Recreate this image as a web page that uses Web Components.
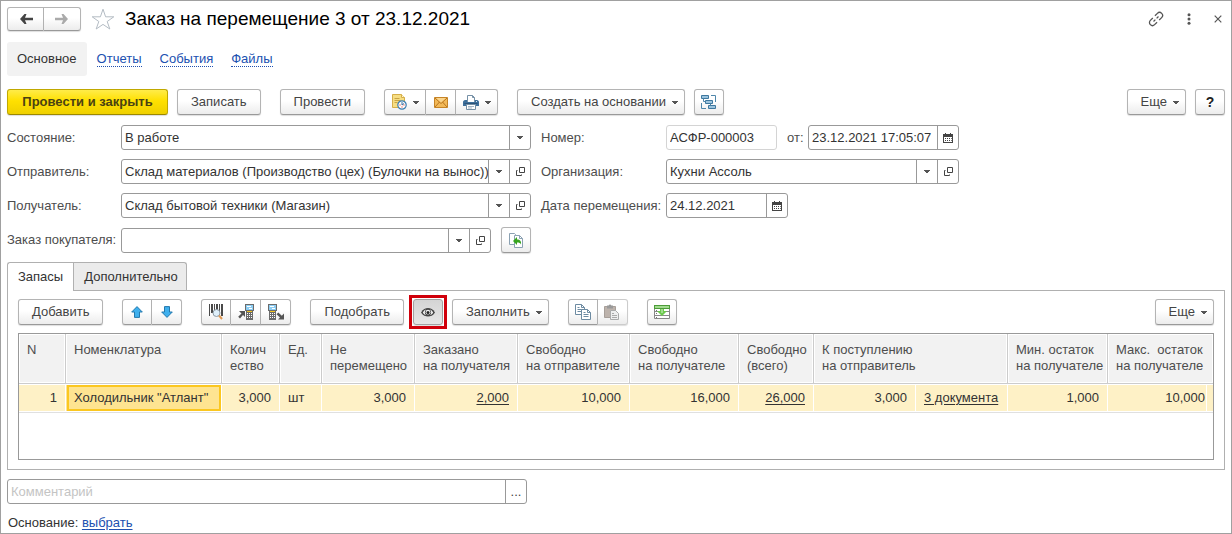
<!DOCTYPE html>
<html lang="ru">
<head>
<meta charset="utf-8">
<title>Заказ на перемещение 3 от 23.12.2021</title>
<style>
  body { margin: 0; background: #fff; font: 13px/16px "Liberation Sans", Arial, sans-serif; color: #4d4d4d; }
</style>
</head>
<body>
<order-window></order-window>

<script>
const define = (name, html, setup) => {
  const template = document.createElement('template');
  template.innerHTML = html;
  customElements.define(name, class extends HTMLElement {
    constructor() {
      super();
      this.attachShadow({ mode: 'open' }).append(template.content.cloneNode(true));
    }
    connectedCallback() {
      if (setup && !this.ready) { this.ready = true; setup(this, this.shadowRoot); }
    }
  });
};

/* ---------- icons: [width, height, drawing] ---------- */
const handheld = '<path d="M0 0h9v7H8v9H1V7H0z" fill="#6b6b6b"/><path d="M1 1h7v5H1z" fill="#8ccdf3"/><path d="M2 2h4v1H2zM4 4h3v1H4z" fill="#fff"/><path d="M2 7h5v1H2z" fill="#f2c51d"/><path d="M2 9h1v1H2zm2 0h1v1H4zm2 0h1v1H6zm-4 2h1v1H2zm2 0h1v1H4zm2 0h1v1H6zm-4 2h1v1H2zm2 0h1v1H4zm2 0h1v1H6z" fill="#fff"/>';
const sheets = (paper, line) => `<path d="M.5.5h6l3 3v7h-9z" fill="${paper}" stroke="${line}"/><path d="M6.500 .5v3h3M2.500 3.500h2M2.500 5.500h5M2.500 7.500h5" fill="none" stroke="${line}"/><path d="M6.500 5.500h6l3 3v7h-9z" fill="${paper}" stroke="${line}"/><path d="M12.500 5.500v3h3M8.500 8.500h2M8.500 10.500h5M8.500 12.500h5" fill="none" stroke="${line}"/>`;
const ICONS = {
  back: [14, 10, '<path d="M5.500 0 1 5l4.500 5H7.500L6 6.300h8V3.700H6L7.500 0z" fill="#444"/>'],
  forward: [14, 10, '<path d="M8.500 0 13 5l-4.500 5H6.500L8 6.300H0V3.700h8L6.500 0z" fill="#aaa"/>'],
  star: [24, 22, '<path d="M12 1.200l2.600 7.600h8.200l-6.600 4.700 2.600 7.500L12 16.400 5.200 21l2.600-7.500L1.200 8.800h8.200z" fill="#fff" stroke="#b4bcc4"/>'],
  link: [16, 16, '<g transform="rotate(-45 8 8)" fill="none" stroke="#555" stroke-width="1.300"><path d="M6.500 5H3a3 3 0 0 0 0 6h3.500M9.500 5H13a3 3 0 0 1 0 6H9.500M4.500 8h2.600M8.900 8h2.600"/></g>'],
  dots: [4, 12, '<circle cx="2" cy="1.700" r="1.500" fill="#555"/><circle cx="2" cy="6" r="1.500" fill="#555"/><circle cx="2" cy="10.300" r="1.500" fill="#555"/>'],
  close: [8, 8, '<path d="M.7.7l6.600 6.600M7.300.7.7 7.300" stroke="#555" stroke-width="1.200"/>'],
  caret: [6, 3, '<path d="M0 0h6v1H5v1H4v1H2V2H1V1H0z" fill="#555"/>'],
  open: [9, 9, '<path d="M3.500.5h5v5h-5z" fill="none" stroke="#444"/><path d="M1.500 3.500h-1v5h5v-1" fill="none" stroke="#444"/>'],
  calendar: [10, 10, '<path d="M0 1h2V0h1v1h4V0h1v1h2v9H0z" fill="#444"/><path d="M1 4h8v5H1z" fill="#fff"/><path d="M2 5h1v1H2zm2 0h1v1H4zm2 0h1v1H6zM2 7h1v1H2zm2 0h1v1H4zm2 0h1v1H6z" fill="#444"/><path d="M8 5h1v1H8zM8 7h1v1H8z" fill="#777"/>'],
  schedule: [16, 16, '<path d="M1.500.5h9l3 3v10h-12z" fill="#f6dd83" stroke="#d5ae49"/><path d="M10.500.5v3h3" fill="#fff5cf" stroke="#d5ae49"/><path d="M3.500 4.500h5M3.500 6.500h6M3.500 8.500h3" stroke="#c9a443"/><circle cx="11" cy="11" r="4.200" fill="#fff" stroke="#3b7cae" stroke-width="1.200"/><path d="M11 8v3l2-1.500" fill="none" stroke="#3672a4"/><path d="M8.500 10.500h1v1h-1zm4 0h1v1h-1zm-2 2h1v1h-1z" fill="#e3241b"/>'],
  mail: [14, 11, '<path d="M.5.5h13v10H.5z" fill="#f3b958" stroke="#c68427"/><path d="M1 1l6 5.500L13 1M1 10l4.500-5M13 10 8.500 5" fill="none" stroke="#b87620"/><path d="M2 1h10L7 5.500z" fill="#fbd58c"/>'],
  print: [16, 15, '<path d="M4.500 7V.5h5l2 2V7" fill="#fff" stroke="#7590a6"/><path d="M9.500.5v2h2" fill="none" stroke="#7590a6"/><path d="M2 5h2v2h8V5h2c1 0 2 1 2 2v4H0V7c0-1 1-2 2-2z" fill="#3d6f9b"/><path d="M1.500 8.500h13" stroke="#2b5379"/><path d="M3.500 9.500h9v5h-9z" fill="#fff" stroke="#7590a6"/><path d="M5 11.500h6M5 13h4" stroke="#a5b7c6"/><path d="M13 6h1v1h-1z" fill="#d2e6f6"/>'],
  structure: [16, 15, '<path d="M.5.5h7v3h-7zM4.500 5.500h7v3h-7zM7.500 10.500h7v3h-7z" fill="#9cc4de" stroke="#3f789f"/><path d="M10 .5h4.500V7M2.500 3.500v3h2M9.500 8.500v2M.5 8v5.500H5" fill="none" stroke="#4f87ab"/>'],
  refill: [16, 15, '<path d="M1.500.5h5l1 1v10h-6z" fill="#fff" stroke="#8ba1b2"/><path d="M6.500 2.500h5l3 3v9h-8z" fill="#fff" stroke="#8ba1b2"/><path d="M11.500 2.500v3h3" fill="none" stroke="#8ba1b2"/><path d="M5 8l4-4v2.500c3 0 4.500 1.500 4 5-.6-1.500-1.700-2-4-2V12z" fill="#37a51f"/>'],
  up: [12, 12, '<path d="M6 .6 11.300 6H8.500v5.400h-5V6H.7z" fill="#3fb0ee" stroke="#2479ad"/>'],
  down: [12, 12, '<path d="M6 11.400 11.300 6H8.500V.6h-5V6H.7z" fill="#3fb0ee" stroke="#2479ad"/>'],
  barcode: [16, 16, '<path d="M1 0h1v12H1zM3 0h2v9H3zM6 0h1v7H6zM8 0h2v6H8zM11 0h1v7h-1zM13 0h2v12h-2z" fill="#4a4a4a"/><circle cx="8.500" cy="9" r="3.500" fill="#dff0fb" stroke="#8e9ba5"/><path d="M11 11.500l3 3.500" stroke="#e09a55" stroke-width="2"/>'],
  load: [16, 16, `<g transform="translate(7 0)">${handheld}</g><path d="M1 7h6v6l-2-2-3 3.500L.2 12.700 3.500 9.500z" fill="#555"/>`],
  unload: [16, 16, `${handheld}<path d="M16 15.500h-6l2-2-3.500-3.300 1.800-1.800L13.800 11.800 16 9.500z" fill="#555"/>`],
  eye: [14, 10, '<path d="M0 5.500C2 2 4.500 1 7 1s5 1 7 4.500C12 8.500 9.500 9.500 7 9.500S2 8.500 0 5.500z" fill="#444"/><path d="M1.800 5.500C3 3.400 4.300 2.600 5 2.500a4.500 4.500 0 0 0 0 5.700C3.700 7.800 2.600 6.800 1.800 5.500zM12.200 5.500C11 3.400 9.700 2.600 9 2.500a4.500 4.500 0 0 1 0 5.700c1.300-.4 2.400-1.400 3.200-2.700z" fill="#f2f2f2"/><circle cx="7" cy="5.200" r="2.400" fill="#eee"/><circle cx="7" cy="5.400" r="1.500" fill="#222"/>'],
  copy: [16, 16, sheets('#fff', '#6d8ba2')],
  paste: [16, 16, '<path d="M.5 2.500h11v11H.5z" fill="#bdb3ac" stroke="#a79f99"/><path d="M3 1.500h1.500L6 .2l1.500 1.300H9v3H3z" fill="#999"/><path d="M6.500 6.500h5l3 3v6h-8z" fill="#eee" stroke="#aaa"/><path d="M8 9.500h2M8 11.500h5M8 13.500h5" stroke="#aaa"/>'],
  columns: [16, 14, '<path d="M.5.5h15v13H.5z" fill="#fff" stroke="#888"/><path d="M0 0h16v4H0z" fill="#4d9c38"/><path d="M1 1h14v2H1z" fill="#a2dc90"/><path d="M1 6.500h14M1 10.500h14" stroke="#888"/><path d="M2 5h1v1H2zM2 8h1v1H2zM2 12h1v1H2z" fill="#777"/><path d="M6 4h4v2h3l-5 5-5-5h3z" fill="#6cc94e"/><path d="M7 4h2v4H7z" fill="#a2dc90"/>']
};
define('form-icon', '<style>:host{display:inline-flex;flex:none}svg{display:block}</style>', (el, root) => {
  const [w, h, art] = ICONS[el.getAttribute('name')];
  root.innerHTML += `<svg width="${w}" height="${h}" viewBox="0 0 ${w} ${h}" aria-hidden="true">${art}</svg>`;
});

/* ---------- buttons ---------- */
define('tool-button', `
<style>
  :host { display: block; flex: none; }
  button { box-sizing: border-box; height: 26px; min-width: 30px; padding: 0 13px; display: flex; align-items: center; justify-content: center; gap: 6px;
    font: inherit; color: #444; white-space: nowrap; border: 1px solid #b4b4b4; border-bottom-color: #999; border-left-width: var(--left-line, 1px);
    border-radius: var(--corners, 3px); background: linear-gradient(#fff 45%, #ececec); box-shadow: 0 1px 1px #0002; }
  :host([icon]) button, :host([strong]) button { padding: 0 6px; }
  :host([icon][menu]) button { min-width: 42px; padding: 0 5px; }
  :host([menu]) button { padding-right: 6px; }
  :host([primary]) button { min-width: 161px; font-weight: bold; color: #4a4213; border-color: #c0a800; border-bottom-color: #9c8800; background: linear-gradient(#ffec4a, #ffe000 45%, #efd000); }
  :host([pressed]) button { background: linear-gradient(#d4d4d4, #e6e6e6); border-color: #a2a2a2; }
  :host([marked]) { outline: 3px solid #d0000b; outline-offset: 1px; }
  :host([short]) button { height: 24px; min-width: 37px; }
  :host([strong]) button { font-weight: bold; color: #222; font-size: 14px; }
  button:disabled { border-color: #ccc; }
</style>
<button type="button"><slot></slot></button>`, (el, root) => {
  const button = root.querySelector('button');
  if (el.hasAttribute('icon')) {
    button.setAttribute('aria-label', el.getAttribute('label'));
    button.querySelector('slot').remove();
    button.insertAdjacentHTML('afterbegin', `<form-icon name="${el.getAttribute('icon')}"></form-icon>`);
  }
  if (el.hasAttribute('menu')) button.insertAdjacentHTML('beforeend', '<form-icon name="caret"></form-icon>');
  if (el.hasAttribute('pressed')) button.setAttribute('aria-pressed', 'true');
  button.disabled = el.hasAttribute('disabled');
});
define('button-group', `
<style>
  :host { display: flex; flex: none; }
  ::slotted(*) { --corners: 0; }
  ::slotted(:first-child) { --corners: 3px 0 0 3px; }
  ::slotted(:last-child) { --corners: 0 3px 3px 0; }
  ::slotted(:not(:first-child)) { --left-line: 0; }
</style><slot></slot>`);
define('command-bar', `
<style>
  :host { display: flex; column-gap: 19px; }
  .end { display: flex; gap: 9px; margin-left: auto; }
</style><slot></slot><div class="end"><slot name="end"></slot></div>`);
define('button-cluster', '<style>:host{display:flex;flex:none;gap:9px}</style><slot></slot>');

/* ---------- fields ---------- */
define('form-field', `
<style>
  :host { display: flex; align-items: center; min-width: 0; }
  label { flex: none; width: var(--label-width, auto); white-space: nowrap; }
  .box { box-sizing: border-box; flex: 1; min-width: 0; height: 25px; display: flex; border: 1px solid #999; border-radius: 3px; background: #fff; overflow: hidden; }
  .value { flex: 1; min-width: 0; display: grid; grid-template-columns: minmax(0, 1fr) 21px; }
  .value form-icon { grid-area: 1 / 2; place-self: stretch; align-items: center; justify-content: center; border-left: 1px solid #999; pointer-events: none; }
  select, input { box-sizing: border-box; width: 100%; min-width: 0; height: 23px; margin: 0; padding: 0 3px; border: 0; outline: 0; background: none; font: inherit; color: #333; appearance: none; }
  select { grid-area: 1 / 1 / 2 / 3; padding-right: 21px; text-overflow: clip; }
  input::placeholder { color: #c4c4c4; opacity: 1; }
  button { box-sizing: border-box; flex: none; width: 21px; padding: 0; border: 0; border-left: 1px solid #999; background: none; font: inherit; color: #444; display: flex; align-items: center; justify-content: center; }
  :host([readonly]) .box { border-color: #d4d4d4; }
</style>
<label for="control"></label><div class="box"></div>`, (el, root) => {
  const get = name => el.getAttribute(name);
  const label = root.querySelector('label'), box = root.querySelector('.box');
  if (get('label')) label.textContent = get('label'); else label.remove();
  const value = get('value') || '';
  if (el.hasAttribute('choice')) {
    box.innerHTML = '<div class="value"><select id="control"><option></option></select><form-icon name="caret"></form-icon></div>';
    box.querySelector('option').textContent = value;
  } else {
    box.innerHTML = '<input id="control" type="text">';
    const input = box.firstChild;
    input.value = value;
    input.readOnly = el.hasAttribute('readonly');
    if (get('placeholder')) { input.placeholder = get('placeholder'); input.setAttribute('aria-label', get('placeholder')); }
  }
  if (get('action')) box.insertAdjacentHTML('beforeend', get('action') === 'more'
    ? '<button type="button" aria-label="Открыть текст">...</button>'
    : `<button type="button" aria-label="${get('action') === 'open' ? 'Открыть' : 'Выбрать дату'}"><form-icon name="${get('action')}"></form-icon></button>`);
});

/* ---------- header ---------- */
define('title-bar', `
<style>
  :host { display: flex; align-items: center; height: 26px; }
  form-icon { margin: 0 10px; }
  h1 { margin: 0; font-size: 19px; line-height: 24px; font-weight: normal; color: #000; white-space: nowrap; }
  nav { display: flex; align-items: center; gap: 23px; margin-left: auto; }
  nav button { display: flex; padding: 0; border: 0; background: none; }
  nav form-icon { margin: 0; }
</style>
<button-group><tool-button short icon="back" label="Назад"></tool-button><tool-button short icon="forward" label="Вперед"></tool-button></button-group>
<form-icon name="star"></form-icon>
<h1><slot></slot></h1>
<nav><button type="button" aria-label="Ссылка"><form-icon name="link"></form-icon></button><button type="button" aria-label="Меню"><form-icon name="dots"></form-icon></button><button type="button" aria-label="Закрыть"><form-icon name="close"></form-icon></button></nav>`);
define('section-nav', `
<style>
  nav { display: flex; align-items: center; gap: 18px; height: 34px; }
  :host { display: block; }
  span { padding: 9px 10px; margin-right: -8px; border-radius: 3px; background: #f2f2f2; color: #333; }
  a { color: #2050b0; text-decoration: none; border-bottom: 1px dotted #2050b0; line-height: 14px; }
</style>
<nav><span aria-current="page">Основное</span><a href="#reports">Отчеты</a><a href="#events">События</a><a href="#files">Файлы</a></nav>`);

/* ---------- requisites ---------- */
define('order-fields', `
<style>
  :host { display: grid; grid-template-columns: minmax(0, 524px) minmax(0, 418px); column-gap: 10px; }
  .column { display: flex; flex-direction: column; gap: 9px; }
  .left { --label-width: 114px; }
  .right { --label-width: 125px; }
  .line { display: flex; gap: 10px; }
  .grow { flex: 1; }
  .number { flex: 0 1 236px; }
  .moment { flex: 1; --label-width: 21px; }
  .date { width: 247px; }
</style>
<div class="column left">
  <form-field label="Состояние:" value="В работе" choice></form-field>
  <form-field label="Отправитель:" value="Склад материалов (Производство (цех) (Булочки на вынос))" choice action="open"></form-field>
  <form-field label="Получатель:" value="Склад бытовой техники (Магазин)" choice action="open"></form-field>
  <div class="line"><form-field class="grow" label="Заказ покупателя:" choice action="open"></form-field><tool-button icon="refill" label="Заполнить по заказу"></tool-button></div>
</div>
<div class="column right">
  <div class="line"><form-field class="number" label="Номер:" value="АСФР-000003" readonly></form-field><form-field class="moment" label="от:" value="23.12.2021 17:05:07" action="calendar"></form-field></div>
  <form-field label="Организация:" value="Кухни Ассоль" choice action="open"></form-field>
  <form-field class="date" label="Дата перемещения:" value="24.12.2021" action="calendar"></form-field>
</div>`);

/* ---------- tabs and table ---------- */
define('tab-panel', `
<style>
  :host { display: flex; flex-direction: column; }
  .tabs { display: flex; }
  .tabs button { height: 28px; padding: 0 8px 0 10px; font: inherit; color: #333; border: 1px solid #b0b0b0; border-bottom: 0; background: #ebebeb; }
  .tabs button:first-child { border-radius: 3px 0 0 0; background: #fff; margin-bottom: -1px; height: 29px; padding: 0 10px; z-index: 1; border-right: 0; }
  .tabs button:last-child { border-radius: 0 3px 0 0; }
  .body { flex: 1; display: flex; flex-direction: column; gap: 8px; padding: 8px 10px 9px; border: 1px solid #b0b0b0; }
</style>
<div class="tabs" role="tablist"><button type="button" role="tab" aria-selected="true">Запасы</button><button type="button" role="tab" aria-selected="false">Дополнительно</button></div>
<div class="body" role="tabpanel"><slot></slot></div>`);

define('stock-table', `
<style>
  :host { display: block; flex: 1; border: 1px solid #999; }
  table { width: 100%; table-layout: fixed; border-collapse: separate; border-spacing: 0; }
  th, td { box-sizing: border-box; padding: 0 8px; text-align: left; font-weight: normal; white-space: nowrap; }
  th { height: 50px; padding-top: 8px; vertical-align: top; background: #f2f2f2; border-right: 1px solid #ccc; border-bottom: 1px solid #ccc; box-shadow: inset 0 0 0 1px #fff; }
  th:last-child { border-right: 0; }
  td { height: 28px; color: #333; background: #fef1c6; border: solid #fff; border-width: 1px 1px 1px 0; box-shadow: 0 1px #e0e0e0; }
  td:last-child { border-right: 0; }
  td.number { text-align: right; }
  td.flush { padding-right: 1px; }
  td.current { background: #fee491; outline: 2px solid #fbc720; outline-offset: -3px; }
  td a { color: #333; text-underline-offset: 2px; }
</style>
<table>
  <colgroup></colgroup>
  <thead><tr>
    <th>N</th><th>Номенклатура</th><th>Колич<br>ество</th><th>Ед.</th><th>Не<br>перемещено</th><th>Заказано<br>на получателя</th>
    <th>Свободно<br>на отправителе</th><th>Свободно<br>на получателе</th><th>Свободно<br>(всего)</th><th colspan="2">К поступлению<br>на отправитель</th>
    <th>Мин. остаток<br>на получателе</th><th colspan="2">Макс. &nbsp;остаток<br>на получателе</th>
  </tr></thead>
  <tbody><tr>
    <td class="number">1</td><td class="current">Холодильник "Атлант"</td><td class="number">3,000</td><td>шт</td><td class="number">3,000</td>
    <td class="number"><a href="#ordered">2,000</a></td><td class="number">10,000</td><td class="number">16,000</td><td class="number"><a href="#free">26,000</a></td>
    <td class="number">3,000</td><td><a href="#documents">3 документа</a></td><td class="number">1,000</td><td class="number flush">10,000</td><td></td>
  </tr></tbody>
</table>`, (el, root) => {
  root.querySelector('colgroup').innerHTML = [47, 156, 58, 42, 93, 103, 112, 109, 75, 102, 92, 100, 99, 6]
    .map(width => `<col style="width:${width}px">`).join('');
});

/* ---------- window ---------- */
define('order-window', `
<style>
  :host { box-sizing: border-box; min-height: 100vh; display: flex; flex-direction: column; padding: 5px 6px 2px; border: 1px solid #a0a0a0; }
  title-bar { padding-right: 3px; }
  section-nav { margin: 10px 0 13px; }
  order-fields { margin: 10px 0 9px; }
  tab-panel { flex: 1; }
  .comment { width: 520px; max-width: 100%; margin: 9px 0 11px; }
  p { margin: 0 1px; color: #333; }
  a { color: #2050b0; text-underline-offset: 2px; }
</style>
<title-bar>Заказ на перемещение 3 от 23.12.2021</title-bar>
<section-nav></section-nav>
<command-bar>
  <button-cluster><tool-button primary>Провести и закрыть</tool-button><tool-button>Записать</tool-button></button-cluster>
  <tool-button>Провести</tool-button>
  <button-group><tool-button icon="schedule" label="Напоминания" menu></tool-button><tool-button icon="mail" label="Отправить"></tool-button><tool-button icon="print" label="Печать" menu></tool-button></button-group>
  <button-cluster><tool-button menu>Создать на основании</tool-button><tool-button icon="structure" label="Структура подчиненности"></tool-button></button-cluster>
  <tool-button slot="end" menu>Еще</tool-button><tool-button slot="end" strong>?</tool-button>
</command-bar>
<order-fields></order-fields>
<tab-panel>
  <command-bar>
    <tool-button>Добавить</tool-button>
    <button-group><tool-button icon="up" label="Вверх"></tool-button><tool-button icon="down" label="Вниз"></tool-button></button-group>
    <button-group><tool-button icon="barcode" label="Поиск по штрихкоду"></tool-button><tool-button icon="load" label="Загрузить из ТСД"></tool-button><tool-button icon="unload" label="Выгрузить в ТСД"></tool-button></button-group>
    <button-cluster><tool-button>Подобрать</tool-button><tool-button icon="eye" label="Показать остатки" pressed marked></tool-button><tool-button menu>Заполнить</tool-button></button-cluster>
    <button-group><tool-button icon="copy" label="Копировать"></tool-button><tool-button icon="paste" label="Вставить" disabled></tool-button></button-group>
    <tool-button icon="columns" label="Настройка колонок"></tool-button>
    <tool-button slot="end" menu>Еще</tool-button>
  </command-bar>
  <stock-table></stock-table>
</tab-panel>
<form-field class="comment" placeholder="Комментарий" action="more"></form-field>
<p>Основание: <a href="#base">выбрать</a></p>`);
</script>
</body>
</html>
